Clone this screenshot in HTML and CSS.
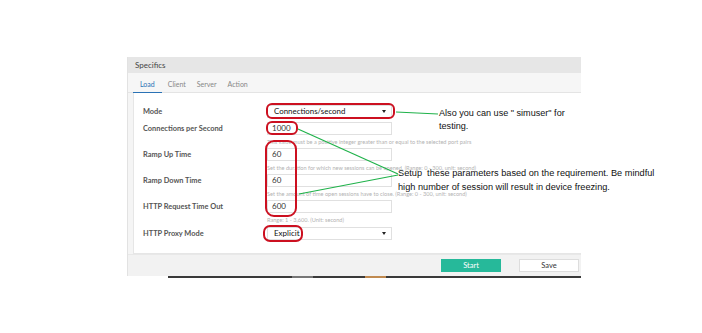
FILE: index.html
```html
<!DOCTYPE html>
<html>
<head>
<meta charset="utf-8">
<link rel="stylesheet" href="styles.css">
</head>
<body>
<div class="page">
  <div class="panel">
    <div class="panel-head">Specifics</div>
    <div class="tabs">
      <span class="tab active">Load</span>
      <span class="tab">Client</span>
      <span class="tab">Server</span>
      <span class="tab">Action</span>
    </div>
    <div class="content">
      <div class="field mode">
        <div class="label">Mode</div>
        <div class="select dark"><span>Connections/second</span><span class="caret"></span></div>
      </div>
      <div class="field">
        <div class="label">Connections per Second</div>
        <div class="input">1000</div>
        <div class="hint">This value must be a positive integer greater than or equal to the selected port pairs</div>
      </div>
      <div class="field">
        <div class="label">Ramp Up Time</div>
        <div class="input">60</div>
        <div class="hint">Set the duration for which new sessions can be opened. (Range: 0 - 300, unit: second)</div>
      </div>
      <div class="field">
        <div class="label">Ramp Down Time</div>
        <div class="input">60</div>
        <div class="hint">Set the amount of time open sessions have to close. (Range: 0 - 300, unit: second)</div>
      </div>
      <div class="field">
        <div class="label">HTTP Request Time Out</div>
        <div class="input">600</div>
        <div class="hint">Range: 1 - 3,600. (Unit: second)</div>
      </div>
      <div class="field proxy">
        <div class="label">HTTP Proxy Mode</div>
        <div class="select"><span>Explicit</span><span class="caret"></span></div>
      </div>
    </div>
    <div class="footer">
      <button class="btn start">Start</button>
      <button class="btn save">Save</button>
    </div>
  </div>
  <div class="baseline">
    <span class="seg seg-gray"></span>
    <span class="seg seg-orange"></span>
  </div>
</div>

<div class="oval oval-mode"></div>
<div class="oval oval-conn"></div>
<div class="oval oval-times"></div>
<div class="oval oval-proxy"></div>

<svg class="lines" width="702" height="333" viewBox="0 0 702 333">
  <line x1="396" y1="112" x2="438" y2="114"/>
  <line x1="298" y1="129" x2="398" y2="174"/>
  <line x1="299" y1="194" x2="398" y2="175"/>
</svg>

<div class="note note-mode">Also you can use " simuser" for<br>testing.</div>
<div class="note note-setup">Setup&nbsp; these parameters based on the requirement. Be mindful<br>high number of session will result in device freezing.</div>
</body>
</html>
```

FILE: styles.css
```css
* { box-sizing: border-box; }
html, body { margin: 0; padding: 0; background: #fff; }
body {
  width: 702px;
  height: 333px;
  overflow: hidden;
  position: relative;
  font-family: Lato, "Open Sans", sans-serif;
}
.page {
  padding-top: 57px;
  padding-left: 127px;
}
.panel {
  width: 454px;
  background: #f5f5f5;
  border-left: 1px solid #e2e2e2;
}
.panel-head {
  height: 16px;
  background: #e6e6e6;
  font-size: 8px;
  line-height: 16px;
  color: #444;
  padding-left: 7px;
}
.tabs {
  height: 20px;
  display: flex;
  align-items: center;
  padding-left: 5px;
  background: #f6f6f6;
  border-bottom: 1px solid #e4e4e4;
}
.tab {
  font-size: 7px;
  color: #888;
  padding: 0 5px 0 6px;
  height: 20px;
  line-height: 22px;
}
.tab.active {
  color: #2a72b5;
  border-bottom: 1.5px solid #2a72b5;
  padding: 0 7px;
}
.content {
  margin-left: 5px;
  background: #fff;
  border: 1px solid #e6e6e6;
  border-right: none;
  border-top: none;
  height: 161px;
  padding-top: 12px;
}
.field {
  display: grid;
  grid-template-columns: 133px 125px;
  grid-template-rows: 13px 13px;
}
.field.mode { grid-template-rows: 13px; margin-bottom: 4px; }
.field.proxy { grid-template-rows: 13px; margin-top: 1px; }
.label {
  padding-left: 9px;
  font-size: 7.4px;
  font-weight: 700;
  color: #555;
  line-height: 13px;
}
.input, .select {
  border: 1px solid #e0e0e0;
  background: #fff;
  height: 13px;
  font-size: 8px;
  line-height: 11px;
  color: #333;
  padding-left: 4px;
}
.select {
  display: flex;
  justify-content: space-between;
  align-items: center;
  padding-left: 6px;
  padding-right: 5px;
  color: #111;
}
.select.dark { font-size: 7.9px; }
.caret {
  width: 0;
  height: 0;
  border-left: 2.5px solid transparent;
  border-right: 2.5px solid transparent;
  border-top: 3px solid #222;
}
.hint {
  grid-column: 2 / 4;
  font-size: 5.6px;
  line-height: 13px;
  color: #b3b3b3;
  white-space: nowrap;
}
.footer {
  height: 22px;
  display: flex;
  align-items: center;
  justify-content: flex-end;
  padding-right: 2px;
  background: #f2f2f2;
  border-top: 1px solid #e8e8e8;
}
.btn {
  font-family: Lato, sans-serif;
  font-size: 7.5px;
  height: 13px;
  width: 60px;
  padding: 0;
  border: 1px solid #ddd;
  cursor: pointer;
}
.btn.start {
  background: #26b99a;
  border-color: #26b99a;
  color: #fff;
  margin-right: 18px;
}
.btn.save {
  background: #fff;
  color: #333;
}
.baseline {
  margin-left: 41px;
  width: 413px;
  height: 2px;
  background: #3a3a3a;
  display: flex;
}
.seg { height: 2px; display: block; }
.seg-gray { margin-left: 124px; width: 21px; background: #777; }
.seg-orange { margin-left: 52px; width: 21px; background: #c08a50; }

.oval {
  position: absolute;
  border: 2.5px solid #cc1020;
  border-radius: 6px;
}
.oval-mode { left: 266px; top: 103px; width: 129px; height: 16px; }
.oval-conn { left: 266px; top: 121px; width: 32px; height: 14px; }
.oval-times { left: 265px; top: 140px; width: 32px; height: 77px; border-radius: 9px; }
.oval-proxy { left: 263px; top: 225px; width: 40px; height: 17px; border-radius: 7px; }

.lines {
  position: absolute;
  left: 0;
  top: 0;
}
.lines line {
  stroke: #1fb24a;
  stroke-width: 1.2;
}
.note {
  position: absolute;
  font-family: "Liberation Sans", Arial, sans-serif;
  color: #111;
  white-space: nowrap;
}
.note-mode {
  left: 439px;
  top: 107px;
  font-size: 9.1px;
  line-height: 13px;
}
.note-setup {
  left: 398px;
  top: 166px;
  font-size: 9.2px;
  line-height: 14px;
}
```
